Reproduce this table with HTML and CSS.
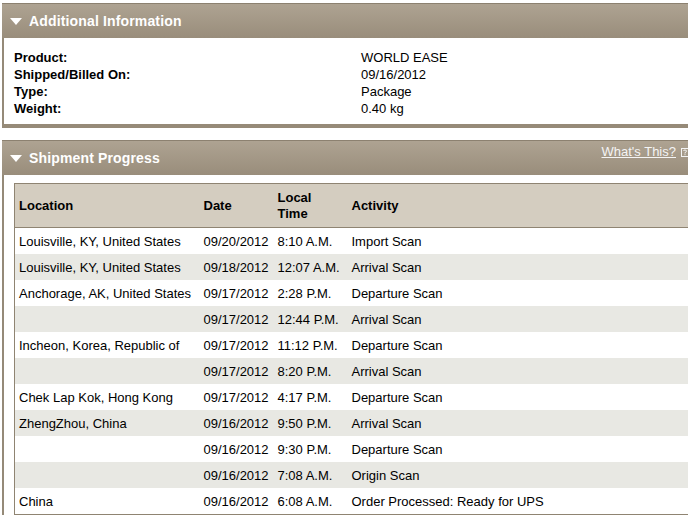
FILE: index.html
```html
<!DOCTYPE html>
<html lang="en">
<head>
<meta charset="utf-8">
<title>Shipment Details</title>
<link rel="stylesheet" href="styles.css">
</head>
<body>
<div class="page">
  <section class="panel panel-info">
    <div class="panel-head">
      <span class="tri"></span>
      <h2 class="panel-title">Additional Information</h2>
    </div>
    <div class="panel-body info-body">
      <dl class="info-list">
        <dt>Product:</dt><dd>WORLD EASE</dd>
        <dt>Shipped/Billed On:</dt><dd>09/16/2012</dd>
        <dt>Type:</dt><dd>Package</dd>
        <dt>Weight:</dt><dd>0.40 kg</dd>
      </dl>
    </div>
  </section>

  <section class="panel panel-progress">
    <div class="panel-head">
      <span class="tri"></span>
      <h2 class="panel-title">Shipment Progress</h2>
      <a class="whats-this" href="#">What's This?</a>
      <svg class="popup-icon" width="8" height="9" viewBox="0 0 8 9" aria-hidden="true">
        <rect x="0.5" y="0.5" width="7" height="8" fill="none" stroke="#f4f4f4" stroke-width="1"/>
        <path d="M2.5 3 Q2.5 2 4 2 Q5.5 2 5.5 3.2 Q5.5 4 4 4.5 L4 5.5" fill="none" stroke="#f4f4f4" stroke-width="1"/>
        <rect x="3.5" y="6.2" width="1" height="1" fill="#f4f4f4"/>
      </svg>
    </div>
    <div class="panel-body progress-body">
      <table class="progress-table">
        <colgroup>
          <col class="c-loc"><col class="c-date"><col class="c-time"><col>
        </colgroup>
        <thead>
          <tr><th>Location</th><th>Date</th><th>Local<br>Time</th><th>Activity</th></tr>
        </thead>
        <tbody>
          <tr><td>Louisville, KY, United States</td><td>09/20/2012</td><td>8:10 A.M.</td><td>Import Scan</td></tr>
          <tr class="alt"><td>Louisville, KY, United States</td><td>09/18/2012</td><td>12:07 A.M.</td><td>Arrival Scan</td></tr>
          <tr><td>Anchorage, AK, United States</td><td>09/17/2012</td><td>2:28 P.M.</td><td>Departure Scan</td></tr>
          <tr class="alt"><td></td><td>09/17/2012</td><td>12:44 P.M.</td><td>Arrival Scan</td></tr>
          <tr><td>Incheon, Korea, Republic of</td><td>09/17/2012</td><td>11:12 P.M.</td><td>Departure Scan</td></tr>
          <tr class="alt"><td></td><td>09/17/2012</td><td>8:20 P.M.</td><td>Arrival Scan</td></tr>
          <tr><td>Chek Lap Kok, Hong Kong</td><td>09/17/2012</td><td>4:17 P.M.</td><td>Departure Scan</td></tr>
          <tr class="alt"><td>ZhengZhou, China</td><td>09/16/2012</td><td>9:50 P.M.</td><td>Arrival Scan</td></tr>
          <tr><td></td><td>09/16/2012</td><td>9:30 P.M.</td><td>Departure Scan</td></tr>
          <tr class="alt"><td></td><td>09/16/2012</td><td>7:08 A.M.</td><td>Origin Scan</td></tr>
          <tr><td>China</td><td>09/16/2012</td><td>6:08 A.M.</td><td>Order Processed: Ready for UPS</td></tr>
        </tbody>
      </table>
    </div>
  </section>
</div>
</body>
</html>
```

FILE: styles.css
```css
html, body {
  margin: 0;
  padding: 0;
  background: #ffffff;
  overflow: hidden;
}
body {
  font-family: "Liberation Sans", Arial, sans-serif;
  font-size: 13px;
  color: #000;
}
.page {
  width: 690px;
  padding-top: 3px;
  margin-left: 2px;
}
.panel-head {
  display: flex;
  align-items: center;
  height: 34px;
  border-top: 1px solid #8c8170;
  background: linear-gradient(#aea392, #998d7b);
}
.tri {
  width: 0;
  height: 0;
  margin-left: 8px;
  margin-right: 7px;
  border-left: 6px solid transparent;
  border-right: 6px solid transparent;
  border-top: 7px solid #ffffff;
}
.panel-title {
  margin: 0;
  font-size: 14px;
  font-weight: bold;
  letter-spacing: 0.15px;
  color: #ffffff;
}
.panel-body {
  border-left: 2px solid #958a78;
}
.info-body {
  padding: 11px 0 7px 10px;
  border-bottom: 4px solid #968a78;
}
.info-list {
  margin: 0;
  display: grid;
  grid-template-columns: 347px 1fr;
  line-height: 17px;
}
.info-list dt {
  font-weight: bold;
}
.info-list dd {
  margin: 0;
}
.panel-progress {
  margin-top: 12px;
}
.whats-this {
  margin-left: auto;
  align-self: flex-start;
  margin-top: 3px;
  font-size: 13px;
  color: #f4f4f4;
  text-decoration: underline;
}
.popup-icon {
  align-self: flex-start;
  margin-top: 7px;
  margin-left: 5px;
  margin-right: 3px;
}
.progress-body {
  padding: 8px 0 0 10px;
}
.progress-table {
  width: 100%;
  border-collapse: collapse;
  table-layout: fixed;
  border-left: 1px solid #8f8472;
  border-bottom: 1px solid #8f8472;
}
.c-loc { width: 185px; }
.c-date { width: 74px; }
.c-time { width: 74px; }
.progress-table thead tr {
  background: #d4cdc0;
  border-top: 1px solid #8f8472;
  border-bottom: 1px solid #8f8472;
}
.progress-table th {
  height: 43px;
  padding: 0 0 0 4px;
  text-align: left;
  vertical-align: middle;
  font-weight: bold;
  line-height: 16px;
}
.progress-table td {
  height: 26px;
  padding: 0 0 0 4px;
  white-space: nowrap;
  vertical-align: middle;
}
.progress-table tr.alt {
  background: #e8e8e3;
}
```
